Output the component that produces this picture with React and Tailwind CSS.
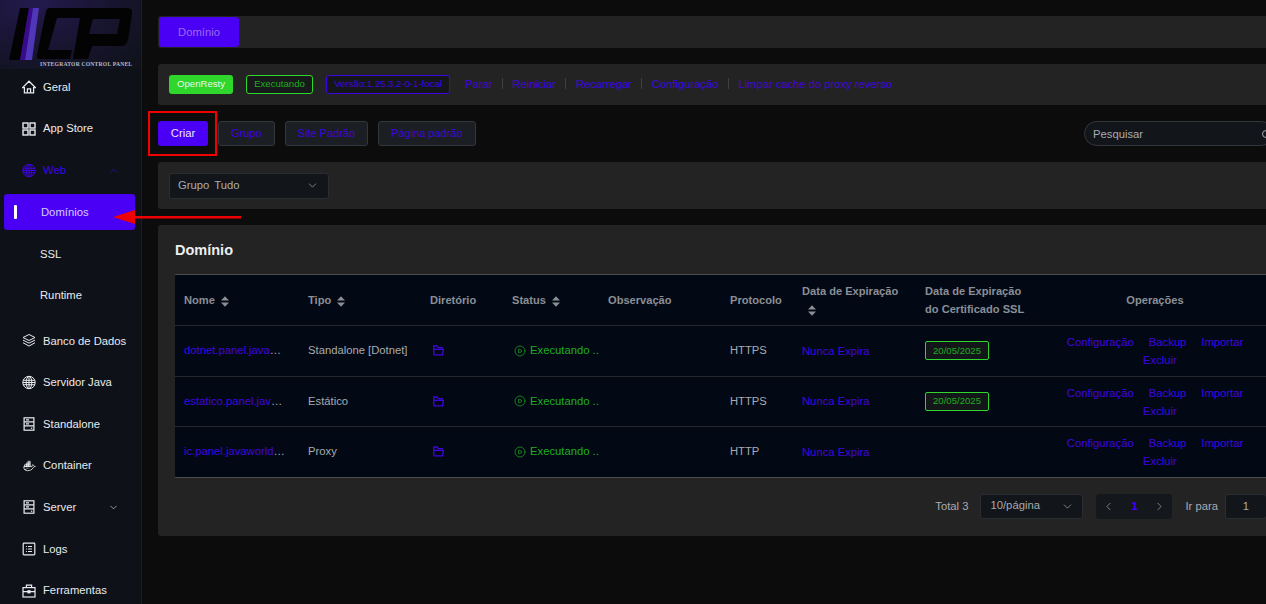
import React from "react";
import { ChevronUp, ChevronDown, ChevronLeft, ChevronRight, CirclePlay } from "lucide-react";
import { TbBrandDocker } from "react-icons/tb";

const Svg = ({ children, sw = 1.2, size = 15 }) => (
  <svg width={size} height={size} viewBox="0 0 14 14" fill="none" stroke="currentColor" strokeWidth={sw}>{children}</svg>
);
const HomeIcon = () => (
  <Svg size={16} sw={1.25}>
    <path d="M0.6 7.6L7 1.2L13.4 7.6H11.6V12.8H2.4V7.6Z" />
    <path d="M5.4 12.8V8.8H8.6V12.8" />
  </Svg>
);
const GridIcon = () => (
  <Svg size={14} sw={1.4}>
    <rect x="1" y="1" width="5" height="5" /><rect x="8" y="1" width="5" height="5" />
    <rect x="1" y="8" width="5" height="5" /><rect x="8" y="8" width="5" height="5" />
  </Svg>
);
const GlobeIcon = () => (
  <Svg size={15} sw={1}>
    <circle cx="7" cy="7" r="6.2" />
    <ellipse cx="7" cy="7" rx="2.8" ry="6.2" />
    <path d="M7 0.8V13.2M1.2 4.8H12.8M0.8 7H13.2M1.2 9.2H12.8" />
  </Svg>
);
const LayersIcon = () => (
  <Svg size={15} sw={1}>
    <path d="M7 1L13 4L7 7L1 4Z" />
    <path d="M1 6.6L7 9.6L13 6.6M1 9.2L7 12.6L13 9.2" />
  </Svg>
);
const ServerIcon = () => (
  <Svg size={14}>
    <rect x="2.1" y="0.8" width="9.8" height="12.4" />
    <path d="M2.1 4.8H11.9M2.1 8.8H11.9M4 2.8H7M4 6.8H7" />
    <path d="M9.6 10.6V11.8" strokeWidth="1.4" />
  </Svg>
);
const LogsIcon = () => (
  <Svg size={14}>
    <rect x="1.2" y="1.2" width="11.6" height="11.6" rx="0.8" />
    <path d="M4 4.5H4.9M6 4.5H10M4 7H4.9M6 7H10M4 9.5H4.9M6 9.5H10" />
  </Svg>
);
const ToolsIcon = () => (
  <Svg size={14}>
    <rect x="1" y="3.6" width="12" height="9.4" />
    <path d="M4.4 3.6V1.2H9.6V3.6M1 7.6H13" />
    <rect x="6" y="6.8" width="2" height="2" fill="currentColor" />
  </Svg>
);
const FolderIcon = () => (
  <svg width="11" height="11" viewBox="0 0 11 11" fill="none" stroke="#3f05e0" strokeWidth="1.3">
    <path d="M0.8 9.8V1H4.2L5.2 2.6H9V4.4M0.8 9.8H9.6L10.4 4.4H0.8" />
  </svg>
);
const Sort = () => (
  <svg width="8" height="11" viewBox="0 0 8 11" fill="#8b8f96" className="inline-block shrink-0">
    <path d="M4 0.2L8 4.5H0Z" />
    <path d="M4 10.8L0 6.5H8Z" />
  </svg>
);

const Item = ({ icon, label, color = "text-[#e9ebee]", chev }) => (
  <div className={`h-9 mb-[5.6px] ml-1 mr-[6px] pl-[18px] pr-[16px] flex items-center text-[11.25px] ${color}`}>
    <span className="w-[14px] h-[14px] flex items-center justify-center shrink-0">{icon}</span>
    <span className="ml-[7px] flex-1 whitespace-nowrap">{label}</span>
    {chev}
  </div>
);

const Dom = ({ name, type, ssl }) => (
  <tr className="border-b border-[#25282c] last:border-b-0">
    <td className="px-[9px]">
      <div className="w-[101px] truncate text-[#a8abb2]"><span className="text-[#3f05e0]">{name}</span></div>
    </td>
    <td className="px-[9px] text-[#a8abb2] whitespace-nowrap">{type}</td>
    <td className="px-[9px] pl-[12px] align-middle"><FolderIcon /></td>
    <td className="px-[9px] pl-[11px] text-[#1fae1f]">
      <div className="flex items-center gap-[4px] whitespace-nowrap"><CirclePlay size={12} strokeWidth={1.4} className="shrink-0" />Executando ..</div>
    </td>
    <td />
    <td className="px-[9px] text-[#a8abb2]">{type === "Proxy" ? "HTTP" : "HTTPS"}</td>
    <td className="px-[9px] text-[#3f05e0] pt-px">Nunca Expira</td>
    <td className="px-[9px]">
      {ssl && <span className="inline-flex items-center justify-center w-[64px] h-[19px] rounded-[2px] border border-[#2fd62c] bg-[#14171a] text-[#1fae1f] text-[9.6px]">20/05/2025</span>}
    </td>
    <td className="align-top pt-[7px] pb-[6.5px]">
      <div className="w-[200px] ml-[15px] flex flex-wrap justify-center gap-x-[15px] leading-[18px] text-[#3f05e0]">
        <span>Configuração</span><span>Backup</span><span>Importar</span><span className="pl-[10px]">Excluir</span>
      </div>
    </td>
  </tr>
);

const Head = ({ children, sort }) => (
  <th className="px-[9px] font-bold text-[11.1px] text-[#8b8f96] leading-[18px] text-left">
    {children}{sort && <span className="ml-[6px] inline-block align-[-1px]"><Sort /></span>}
  </th>
);

const Sep = () => <span className="w-px h-[11px] bg-[#3d3f42] mx-[9.5px]" />;

export default function App() {
  const btn = "h-[25px] px-3 flex items-center rounded-[3px] border border-[#33363a] bg-[#1b1e22] text-[#3f05e0] text-[11px]";
  return (
    <div className="relative w-[1266px] h-[604px] overflow-hidden flex bg-[#0c0c0c] text-[11.25px]" style={{ fontFamily: '"Liberation Sans", Arial, sans-serif' }}>
      <aside className="w-[142px] shrink-0 bg-[#0e1218] border-r border-[#1b1d20] overflow-hidden">
        <div className="h-[69px] relative bg-[radial-gradient(ellipse_at_25%_0%,#231a4d_0%,#191533_45%,#0e1218_100%)]">
          <svg width="142" height="62" viewBox="0 0 142 62" className="absolute left-0 top-0">
            <path d="M20 8H29L20 60H9Z" fill="#030303" />
            <path d="M29 8H33L25 60H20Z" fill="#3a0a8c" />
            <path d="M33 8H39L32 60H25Z" fill="#5036b8" />
            <path fillRule="evenodd" d="M50 8H127Q133 8 132 14L128 40Q127 46 120 46H92L88 59H73L80 18H57L48 50H72L70 59H40Q36 59 37 55L46 11Q47 8 50 8ZM93 19H120L117 34H89Z" fill="#030303" />
          </svg>
          <span className="absolute left-[40px] top-[61px] whitespace-nowrap text-[5.6px] leading-[7px] font-bold tracking-[0.22px] text-[#b9b9c4]" style={{ fontFamily: '"Liberation Serif", serif' }}>INTEGRATOR CONTROL PANEL</span>
        </div>
        <Item icon={<HomeIcon />} label="Geral" />
        <Item icon={<GridIcon />} label="App Store" />
        <Item icon={<GlobeIcon />} label="Web" color="text-[#3f05e0]" chev={<ChevronUp size={11} strokeWidth={1.3} />} />
        <div className="h-9 mb-[5.6px] ml-1 mr-[6px] rounded-[3px] bg-[#4a00f5] relative flex items-center pt-px pl-[37px] text-[#d8ccfa]">
          <span className="absolute left-[10px] top-[11px] w-[3px] h-[14px] rounded-[1px] bg-white" />
          Domínios
        </div>
        <div className="h-9 mb-[5.6px] ml-1 mr-[6px] flex items-center pt-[2px] pl-[36px] text-[#e9ebee]">SSL</div>
        <div className="h-9 mb-[10px] ml-1 mr-[6px] flex items-center pt-px pl-[36px] text-[#e9ebee]">Runtime</div>
        <Item icon={<LayersIcon />} label="Banco de Dados" />
        <Item icon={<GlobeIcon />} label="Servidor Java" />
        <Item icon={<ServerIcon />} label="Standalone" />
        <Item icon={<TbBrandDocker size={18} strokeWidth={1.4} />} label="Container" />
        <Item icon={<ServerIcon />} label="Server" chev={<ChevronDown size={11} strokeWidth={1.3} />} />
        <Item icon={<LogsIcon />} label="Logs" />
        <Item icon={<ToolsIcon />} label="Ferramentas" />
      </aside>

      <main className="flex-1 overflow-hidden pl-4 pt-4">
        <div className="w-[1132px] flex flex-col gap-4">
          <div className="h-8 rounded-[3px] bg-[#232323] p-px">
            <div className="w-[80px] h-[30px] rounded-[3px] bg-[#4a00f5] text-[#9a6bf5] flex items-center justify-center">Domínio</div>
          </div>

          <div className="h-[41px] rounded-[3px] bg-[#232323] flex items-center pl-[11px] pb-px">
            <span className="w-[64px] h-[19px] rounded-[3px] bg-[#2fd62c] text-[#e8f8e8] text-[9.6px] flex items-center justify-center">OpenResty</span>
            <span className="ml-[13px] w-[67px] h-[19px] rounded-[3px] border border-[#2fd62c] bg-[#17191b] text-[#1fae1f] text-[9.6px] flex items-center justify-center">Executando</span>
            <span className="ml-[13px] w-[124px] h-[19px] rounded-[3px] border border-[#3f05e0] bg-[#14161a] text-[#3f05e0] text-[9.6px] flex items-center justify-center whitespace-nowrap">Versão:1.25.3.2-0-1-focal</span>
            <div className="ml-[15px] flex items-center text-[#3f05e0] text-[11.2px]">
              <span>Parar</span><Sep /><span>Reiniciar</span><Sep /><span>Recarregar</span><Sep /><span>Configuração</span><Sep /><span>Limpar cache do proxy reverso</span>
            </div>
          </div>

          <div className="h-[25px] flex items-center pr-4">
            <div className="relative">
              <div className="w-[50px] h-[25px] rounded-[3px] bg-[#4a00f5] text-[#ece6fd] flex items-center justify-center">Criar</div>
              <div className="absolute left-[-10px] top-[-10px] w-[69px] h-[45px] border-2 border-[#f00000]" />
            </div>
            <div className={`ml-[10px] ${btn}`}>Grupo</div>
            <div className={`ml-[10px] ${btn}`}>Site Padrão</div>
            <div className={`ml-[10px] ${btn}`}>Página padrão</div>
            <div className="ml-auto w-[190px] h-[25px] rounded-full border border-[#33363a] bg-[#12161a] pl-2 pt-px text-[#a8abb2] flex items-center justify-between pr-[3px]">
              Pesquisar
              <span className="w-[8px] h-[8px] rounded-full border border-[#a8abb2]" />
            </div>
          </div>

          <div className="h-[47px] rounded-[3px] bg-[#232323] flex items-center pl-[11px]">
            <div className="w-[160px] h-[26px] rounded-[3px] border border-[#2a2d31] bg-[#12161a] text-[#a8abb2] flex items-center pl-2 pr-[9px]">
              <span>Grupo</span><span className="ml-[5px] flex-1">Tudo</span>
              <ChevronDown size={13} strokeWidth={1.3} />
            </div>
          </div>

          <div className="h-[311px] rounded-[3px] bg-[#232323] px-[17px]">
            <div className="h-[49px] flex items-center pt-[2px] text-[14.5px] font-bold text-[#eceef1]">Domínio</div>
            <table className="w-[1098px] table-fixed border-y border-[#4a4c4f] bg-[#020915] border-collapse">
              <colgroup>
                <col className="w-[124px]" /><col className="w-[122px]" /><col className="w-[82px]" /><col className="w-[96px]" /><col className="w-[122px]" /><col className="w-[72px]" /><col className="w-[123px]" /><col className="w-[124px]" /><col className="w-[233px]" />
              </colgroup>
              <thead>
                <tr className="h-[51px] border-b border-[#25282c]">
                  <Head sort>Nome</Head>
                  <Head sort>Tipo</Head>
                  <Head>Diretório</Head>
                  <Head sort>Status</Head>
                  <Head>Observação</Head>
                  <Head>Protocolo</Head>
                  <Head><div>Data de Expiração</div><div className="pl-[6px]"><Sort /></div></Head>
                  <Head><div>Data de Expiração</div><div>do Certificado SSL</div></Head>
                  <th className="font-bold text-[11.1px] text-[#8b8f96] text-center pr-[3px]">Operações</th>
                </tr>
              </thead>
              <tbody>
                <Dom name="dotnet.panel.javaworld.com" type="Standalone [Dotnet]" ssl />
                <Dom name="estatico.panel.javaworld.com" type="Estático" ssl />
                <Dom name="ic.panel.javaworld.com" type="Proxy" />
              </tbody>
            </table>
            <div className="mt-4 mr-[6px] h-[25px] flex items-center justify-end text-[#a8abb2]">
              <span>Total 3</span>
              <div className="ml-3 w-[103px] h-[25px] rounded-[3px] border border-[#2a2d31] bg-[#12161a] flex items-center justify-between pl-[9px] pr-[8px]">
                <span className="-mt-[2px]">10/página</span><ChevronDown size={13} strokeWidth={1.3} />
              </div>
              <div className="ml-[13px] flex h-[25px] rounded-[3px] bg-[#14171b] overflow-hidden">
                <span className="w-[25px] flex items-center justify-center"><ChevronLeft size={13} strokeWidth={1.3} /></span>
                <span className="w-[26px] flex items-center justify-center text-[#4a00f5] font-bold text-[11px]">1</span>
                <span className="w-[25px] flex items-center justify-center"><ChevronRight size={13} strokeWidth={1.3} /></span>
              </div>
              <span className="ml-[13px]">Ir para</span>
              <div className="ml-[7px] w-[42px] h-[25px] rounded-[3px] border border-[#2a2d31] bg-[#12161a] flex items-center justify-center">1</div>
            </div>
          </div>
        </div>
      </main>

      <svg width="130" height="16" viewBox="0 0 130 16" className="absolute left-[112px] top-[209px]">
        <path d="M1 8L23 1V7H129V9.5H23V15Z" fill="#f00000" />
      </svg>
    </div>
  );
}
